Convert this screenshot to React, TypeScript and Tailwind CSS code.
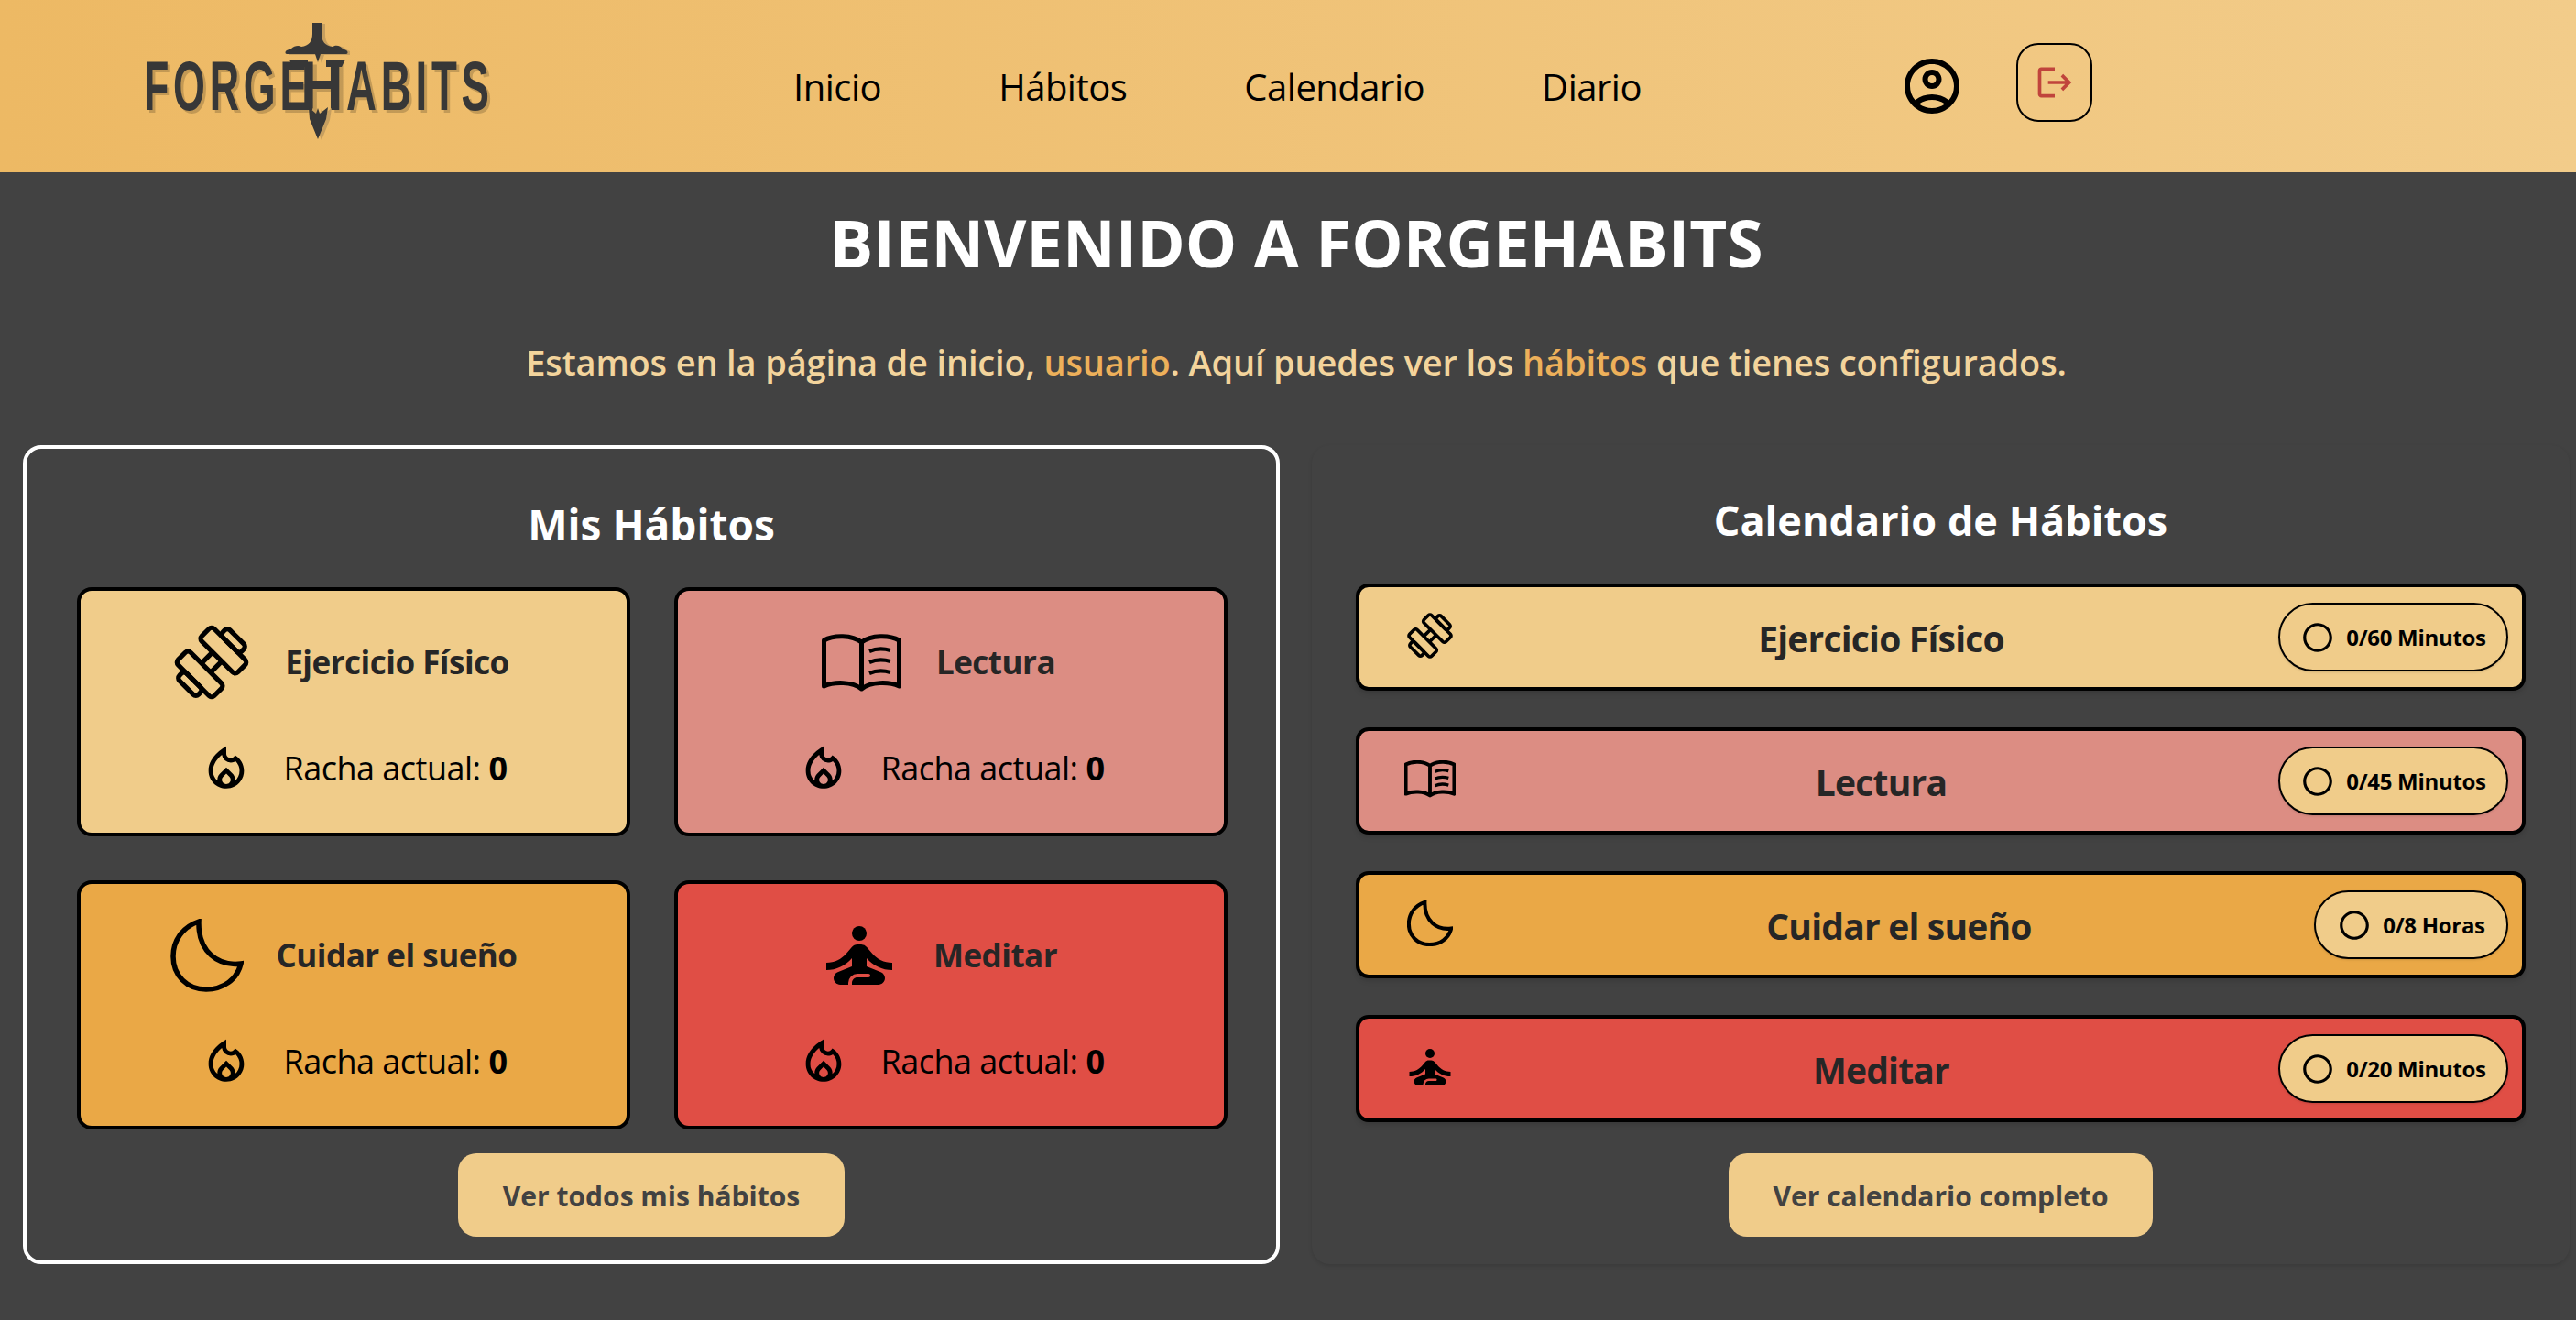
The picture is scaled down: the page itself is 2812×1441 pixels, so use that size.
import {
  MdLogout,
  MdOutlineAccountCircle,
  MdOutlineCircle,
  MdOutlineLocalFireDepartment,
  MdOutlineSelfImprovement,
} from "react-icons/md";

const font = "font-['Open_Sans',sans-serif]";

// these three are not in the icon sets with this outline
const Dumbbell = ({ size, stroke }: { size: number; stroke: number }) => (
  <svg width={size} height={size} viewBox="0 0 81 81" fill="none" stroke="currentColor" strokeWidth={stroke}>
    <g transform="rotate(-45 40.5 40.5)">
      <rect x="49" y="13" width="19" height="55" rx="4" />
      <rect x="68" y="26" width="11" height="29" rx="4" />
      <rect x="13" y="13" width="19" height="55" rx="4" />
      <rect x="2" y="26" width="11" height="29" rx="4" />
      <path d="M32 33.5h17M32 47.5h17" />
    </g>
  </svg>
);

const Book = ({ width, stroke }: { width: number; stroke: number }) => (
  <svg width={width} height={(width * 63) / 87} viewBox="0 0 87 63" fill="none" stroke="currentColor" strokeWidth={stroke} strokeLinejoin="round">
    <path d="M43.5 9C33 1 13 1 2.5 7v50c11-5 31-5 41 3 10-8 30-8 41-3V7C74 1 54 1 43.5 9zM43.5 9v51" />
    <path strokeWidth={stroke - 0.8} d="M52 19c7-3 16-3 23-1M52 31c7-3 16-3 23-1M52 43c7-3 16-3 23-1" />
  </svg>
);

const Moon = ({ width, stroke }: { width: number; stroke: number }) => (
  <svg width={width} height={width} viewBox="0 0 80 80" fill="none" stroke="currentColor" strokeWidth={stroke}>
    <path d="M31 3C13 9 3 24 3 41 3 62 18 77 39 77 58 77 73 66 77 49 52 52 30 36 31 3z" />
  </svg>
);

const habits = [
  { name: "Ejercicio Físico", bg: "bg-[#f0cc8a]", goal: "0/60 Minutos", pill: "w-[251px]", gap: "gap-[39px]", shift: "pr-[26px]" },
  { name: "Lectura", bg: "bg-[#dc8d83]", goal: "0/45 Minutos", pill: "w-[251px]", gap: "gap-[38px]", shift: "pr-[27px]" },
  { name: "Cuidar el sueño", bg: "bg-[#eaa846]", goal: "0/8 Horas", pill: "w-[212px]", gap: "gap-[36px]", shift: "pr-[22px]" },
  { name: "Meditar", bg: "bg-[#e04e45]", goal: "0/20 Minutos", pill: "w-[251px]", gap: "gap-[33px]", shift: "pr-[32px]" },
];

const HabitIcon = ({ index, big }: { index: number; big: boolean }) => {
  if (index === 0) return <Dumbbell size={big ? 82 : 50} stroke={big ? 5.2 : 6} />;
  if (index === 1) return <Book width={big ? 87 : 56} stroke={big ? 5 : 6} />;
  if (index === 2) return <Moon width={big ? 80 : 50} stroke={big ? 5.5 : 6.5} />;
  return <MdOutlineSelfImprovement size={big ? 96 : 60} />;
};

const Logo = () => (
  <div className="relative -ml-[3px] mr-[3px] h-[120px] w-[373px] font-['Liberation_Sans',sans-serif] text-[76px] font-bold leading-[120px] text-[#373737] [text-shadow:5px_3px_0_rgba(0,0,0,0.18)]">
    <div className="flex">
      <span className="w-[152px] origin-left scale-x-[0.59] tracking-[8px] whitespace-nowrap">FORGE</span>
      <span className="w-[69px] origin-left translate-x-[19px] scale-x-[0.85]">H</span>
      <span className="w-[152px] origin-left scale-x-[0.6] tracking-[8px] whitespace-nowrap">ABITS</span>
    </div>
    <svg className="absolute left-[153px] top-[-9px]" width="72" height="134" viewBox="0 0 72 134">
      <path fill="#c79f5f" transform="translate(4 1)" d="M31 0h10v12c0 8 4 13 12 14 5-3 9 0 11 2l4 2c2 1 2 4 0 4H40l-3 9-3-9H3c-2 0-2-3 0-4l5-2c3-3 8-4 11-2 8-1 12-6 12-14zM27 92l8 7 2-6 2 6 9-7-2 13-9 22-9-22z" />
      <path fill="#373737" d="M31 0h10v12c0 8 4 13 12 14 5-3 9 0 11 2l4 2c2 1 2 4 0 4H40l-3 9-3-9H3c-2 0-2-3 0-4l5-2c3-3 8-4 11-2 8-1 12-6 12-14zM27 92l8 7 2-6 2 6 9-7-2 13-9 22-9-22zM6 40h20v8H9zM46 40h21l-4 8H46z" />
    </svg>
  </div>
);

export default function App() {
  return (
    <div className={`min-h-[1441px] bg-[#424242] ${font}`}>
      <header className="flex h-[188px] items-center bg-gradient-to-r from-[#edb964] to-[#f2cc8a] pl-[160px]">
        <Logo />
        <nav className="ml-[333px] flex w-[926px] justify-between pt-[2px] text-[40px] font-medium tracking-[-0.5px] text-black">
          <span>Inicio</span>
          <span>Hábitos</span>
          <span>Calendario</span>
          <span>Diario</span>
        </nav>
        <MdOutlineAccountCircle size={72} className="ml-[281px] text-black" />
        <button className="ml-[56px] -mt-[8px] flex h-[86px] w-[83px] items-center justify-center rounded-[24px] border-2 border-black">
          <MdLogout size={44} className="text-[#c0443c]" />
        </button>
      </header>

      <h1 className="mt-[28px] pl-[18px] text-center text-[71px] leading-[98px] font-bold text-white">BIENVENIDO A FORGEHABITS</h1>

      <p className="mt-[56px] pl-[18px] text-center text-[38px] leading-[50px] font-semibold tracking-[-0.15px] text-[#f3d49c]">
        Estamos en la página de inicio, <span className="text-[#edb05a]">usuario</span>. Aquí puedes ver los{" "}
        <span className="text-[#edb05a]">hábitos</span> que tienes configurados.
      </p>

      <main className="mt-[66px] flex gap-[35px] pl-[25px]">
        <section className="h-[894px] w-[1372px] rounded-[20px] border-4 border-white pt-[48px] pl-[55px]">
          <h2 className="pr-[55px] text-center text-[46px] leading-[68px] font-bold text-white">Mis Hábitos</h2>
          <div className="mt-[35px] grid grid-cols-[604px_604px] gap-[48px]">
            {habits.map((h, i) => (
              <div key={h.name} className={`flex h-[272px] flex-col items-center rounded-[16px] border-4 border-black pt-[30px] ${h.bg}`}>
                <div className={`flex h-[96px] items-center ${h.gap} ${h.shift} text-[#262626]`}>
                  <span className="text-black">
                    <HabitIcon index={i} big />
                  </span>
                  <span className="text-[35px] font-bold tracking-[-0.5px]">{h.name}</span>
                </div>
                <div className="mt-[38px] flex h-[60px] items-center gap-[33px] text-black">
                  <MdOutlineLocalFireDepartment size={58} />
                  <span className="text-[36px] tracking-[-0.5px]">
                    Racha actual: <b>0</b>
                  </span>
                </div>
              </div>
            ))}
          </div>
          <button className="mt-[26px] ml-[416px] block h-[91px] w-[422px] rounded-[20px] bg-[#f0cc8a] pt-[2px] text-[30px] font-bold text-[#424242]">
            Ver todos mis hábitos
          </button>
        </section>

        <section className="h-[894px] w-[1373px] rounded-[20px] px-[48px] pt-[48px] shadow-[0_2px_4px_rgba(0,0,0,0.12)]">
          <h2 className="text-center text-[45px] leading-[68px] font-bold text-white">Calendario de Hábitos</h2>
          <div className="mt-[35px] flex flex-col gap-[40px]">
            {habits.map((h, i) => (
              <div key={h.name} className={`flex h-[117px] items-center rounded-[14px] border-4 border-black pr-[15px] shadow-md ${h.bg}`}>
                <div className="flex h-full w-[136px] items-center justify-center pl-[18px] pb-[4px] text-black">
                  <HabitIcon index={i} big={false} />
                </div>
                <span className="flex-1 pt-[3px] text-center text-[39px] font-bold tracking-[-0.8px] text-[#262626]">{h.name}</span>
                <div className={`flex h-[75px] items-center justify-center gap-[12px] rounded-full border-2 border-black bg-[#f0cc8a] text-[24px] font-bold tracking-[-0.3px] text-black shadow-sm ${h.pill}`}>
                  <MdOutlineCircle size={38} />
                  <span>{h.goal}</span>
                </div>
              </div>
            ))}
          </div>
          <button className="mx-auto mt-[34px] block h-[91px] w-[463px] rounded-[20px] bg-[#f0cc8a] pt-[2px] text-[30px] font-bold text-[#424242]">
            Ver calendario completo
          </button>
        </section>
      </main>
    </div>
  );
}
